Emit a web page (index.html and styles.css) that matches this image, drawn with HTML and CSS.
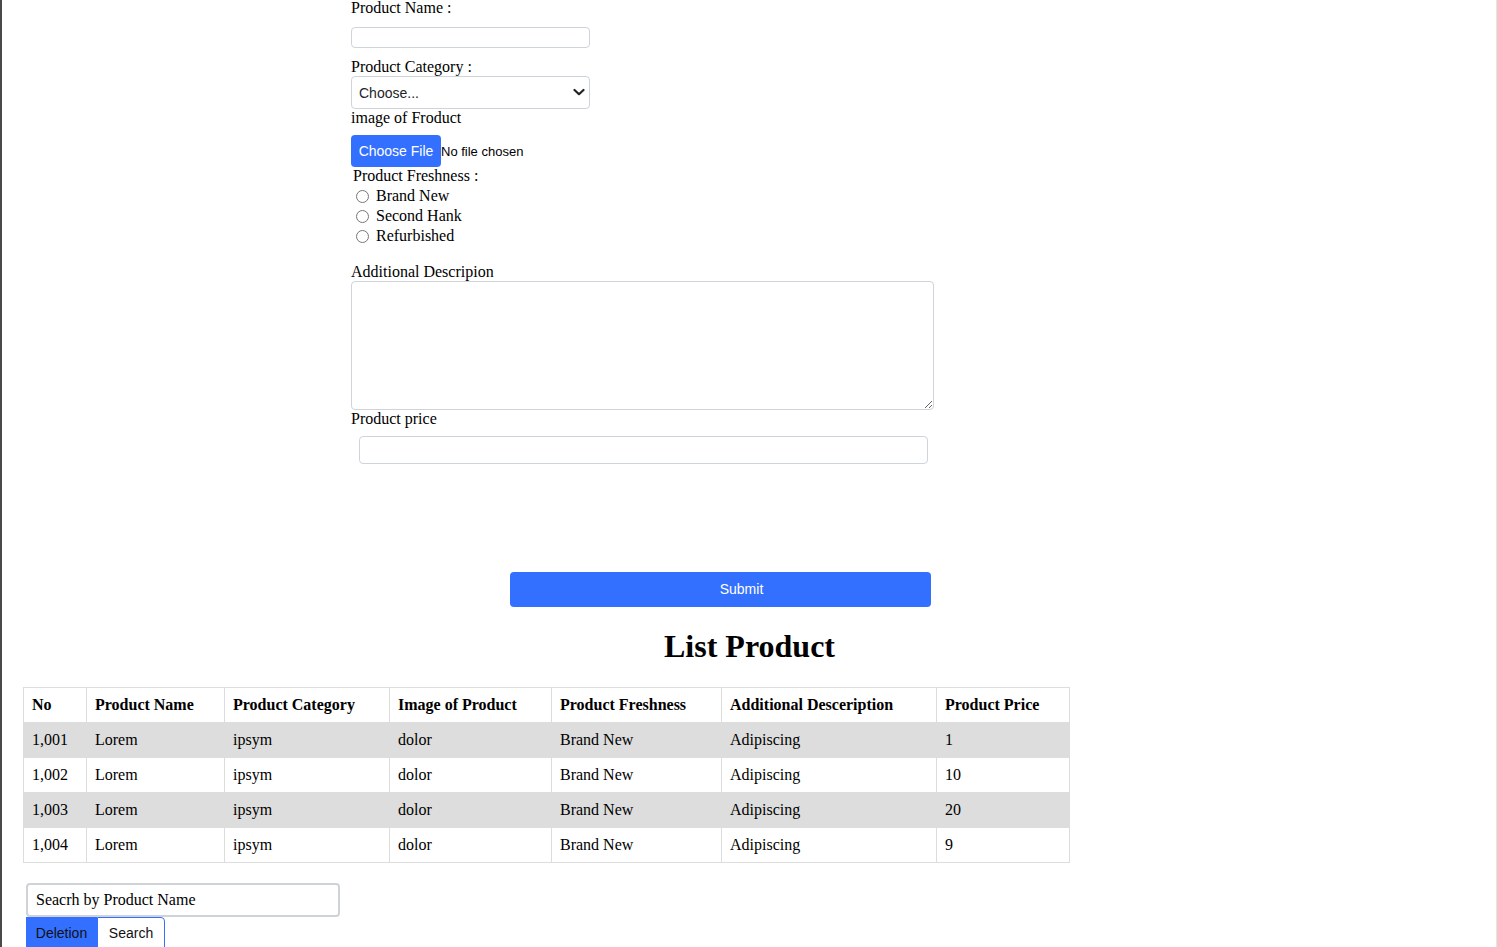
FILE: index.html
```html
<!DOCTYPE html>
<html lang="en">
<head>
<meta charset="utf-8">
<title>Product</title>
<link rel="stylesheet" href="styles.css">
</head>
<body>
<div class="page">
  <form class="form">
    <label class="label" for="pname">Product Name :</label>
    <input class="field name-field" id="pname" type="text">
    <label class="label label-cat" for="pcat">Product Category :</label>
    <div class="select-wrap">
      <select class="field select-field" id="pcat">
        <option>Choose...</option>
      </select>
      <svg class="chevron" width="12" height="10" viewBox="0 0 12 10"><path d="M1.5 3 L6 7.2 L10.5 3" fill="none" stroke="#222" stroke-width="2.2" stroke-linecap="round" stroke-linejoin="round"/></svg>
    </div>
    <label class="label" for="pimg">image of Froduct</label>
    <input class="file-field" id="pimg" type="file">
    <div class="label fresh-label">Product Freshness :</div>
    <div class="radio-group">
      <div class="radio-line"><input class="radio" type="radio" name="fresh" id="r1"><label for="r1">Brand New</label></div>
      <div class="radio-line"><input class="radio" type="radio" name="fresh" id="r2"><label for="r2">Second Hank</label></div>
      <div class="radio-line"><input class="radio" type="radio" name="fresh" id="r3"><label for="r3">Refurbished</label></div>
    </div>
    <label class="label desc-label" for="pdesc">Additional Descripion</label>
    <textarea class="field desc-field" id="pdesc"></textarea>
    <label class="label" for="pprice">Product price</label>
    <input class="field price-field" id="pprice" type="text">
    <button class="submit" type="button">Submit</button>
  </form>

  <h1 class="title">List Product</h1>

  <table class="table">
    <colgroup>
      <col class="c1"><col class="c2"><col class="c3"><col class="c4"><col class="c5"><col class="c6"><col class="c7">
    </colgroup>
    <thead>
      <tr><th>No</th><th>Product Name</th><th>Product Category</th><th>Image of Product</th><th>Product Freshness</th><th>Additional Desceription</th><th>Product Price</th></tr>
    </thead>
    <tbody>
      <tr class="odd"><td>1,001</td><td>Lorem</td><td>ipsym</td><td>dolor</td><td>Brand New</td><td>Adipiscing</td><td>1</td></tr>
      <tr><td>1,002</td><td>Lorem</td><td>ipsym</td><td>dolor</td><td>Brand New</td><td>Adipiscing</td><td>10</td></tr>
      <tr class="odd"><td>1,003</td><td>Lorem</td><td>ipsym</td><td>dolor</td><td>Brand New</td><td>Adipiscing</td><td>20</td></tr>
      <tr><td>1,004</td><td>Lorem</td><td>ipsym</td><td>dolor</td><td>Brand New</td><td>Adipiscing</td><td>9</td></tr>
    </tbody>
  </table>

  <div class="search-area">
    <input class="search-field" type="text" value="Seacrh by Product Name">
    <div class="btn-row">
      <button class="btn-del" type="button">Deletion</button>
      <button class="btn-search" type="button">Search</button>
    </div>
  </div>
</div>
</body>
</html>
```
FILE: styles.css
```css
html, body {
  margin: 0;
  padding: 0;
  background: #ffffff;
}
body {
  font-family: "Liberation Serif", "Times New Roman", serif;
  font-size: 16px;
  color: #000;
  overflow: hidden;
}
.page {
  min-height: 947px;
  border-left: 2px solid #4a4a4a;
  border-right: 1px solid #e4e4e4;
  width: 1494px;
}
.form {
  display: flex;
  flex-direction: column;
  align-items: flex-start;
  padding-left: 349px;
  margin-top: -1px;
}
.label {
  display: block;
  line-height: 18px;
}
.field {
  box-sizing: border-box;
  border: 1px solid #ced4da;
  border-radius: 4px;
  background: #fff;
  font-family: "Liberation Sans", Arial, sans-serif;
  font-size: 14px;
  margin: 0;
}
.name-field {
  width: 239px;
  height: 21px;
  margin-top: 10px;
}
.label-cat {
  margin-top: 10px;
}
.select-wrap {
  position: relative;
  width: 239px;
  height: 33px;
}
.select-field {
  width: 239px;
  height: 33px;
  padding: 0 24px 0 7px;
  appearance: none;
  -webkit-appearance: none;
  color: #212529;
}
.chevron {
  position: absolute;
  right: 5px;
  top: 11px;
  pointer-events: none;
}
.file-field {
  margin-top: 8px;
  font-family: "Liberation Sans", Arial, sans-serif;
  font-size: 13px;
  height: 32px;
  line-height: 32px;
}
.file-field::file-selector-button {
  background: #3370ff;
  color: #fff;
  border: none;
  border-radius: 4px;
  width: 90px;
  height: 32px;
  margin: 0;
  font-family: "Liberation Sans", Arial, sans-serif;
  font-size: 14px;
}
.fresh-label {
  padding-left: 2px;
}
.radio-group {
  padding-top: 1px;
}
.radio-line {
  display: flex;
  align-items: center;
  line-height: 20px;
  height: 20px;
}
.radio-line label {
  margin-left: 4px;
}
.radio {
  width: 13px;
  height: 13px;
  margin: 0 3px 0 5px;
}
.desc-label {
  margin-top: 17px;
}
.desc-field {
  width: 583px;
  height: 129px;
  resize: both;
}
.price-field {
  width: 569px;
  height: 28px;
  margin-top: 8px;
  margin-left: 8px;
}
.submit {
  margin-top: 108px;
  margin-left: 159px;
  width: 421px;
  height: 35px;
  padding: 0 0 2px 42px;
  background: #3370ff;
  color: #fff;
  border: none;
  border-radius: 4px;
  font-family: "Liberation Sans", Arial, sans-serif;
  font-size: 14px;
}
.title {
  margin: 21px 0 0;
  font-size: 32px;
  line-height: 36px;
  font-weight: bold;
  text-align: center;
  padding-left: 1px;
}
.table {
  margin: 23px 0 0 21px;
  border-collapse: collapse;
  table-layout: fixed;
  width: 1046px;
  border: 1px solid #dddddd;
}
.c1 { width: 63px; }
.c2 { width: 138px; }
.c3 { width: 165px; }
.c4 { width: 162px; }
.c5 { width: 170px; }
.c6 { width: 215px; }
.c7 { width: 133px; }
.table th,
.table td {
  border: 1px solid #dddddd;
  padding: 0 8px;
  height: 34px;
  text-align: left;
  line-height: 18px;
  white-space: nowrap;
}
.table th {
  font-weight: bold;
}
.table tr.odd td {
  background: #dddddd;
}
.search-area {
  margin: 20px 0 0 24px;
  display: flex;
  flex-direction: column;
  align-items: flex-start;
}
.search-field {
  box-sizing: border-box;
  width: 314px;
  height: 34px;
  border: 2px solid #cfd2d6;
  border-radius: 4px;
  padding: 0 8px;
  font-family: "Liberation Serif", "Times New Roman", serif;
  font-size: 16px;
  color: #000;
  margin: 0;
}
.btn-row {
  display: flex;
}
.btn-del,
.btn-search {
  box-sizing: border-box;
  height: 32px;
  font-family: "Liberation Sans", Arial, sans-serif;
  font-size: 14px;
  color: #111;
  margin: 0;
  padding: 0;
}
.btn-del {
  width: 71px;
  background: #3370ff;
  border: none;
}
.btn-search {
  width: 68px;
  background: #fff;
  border: 1px solid #3370ff;
  border-radius: 0 4px 0 0;
}
```
